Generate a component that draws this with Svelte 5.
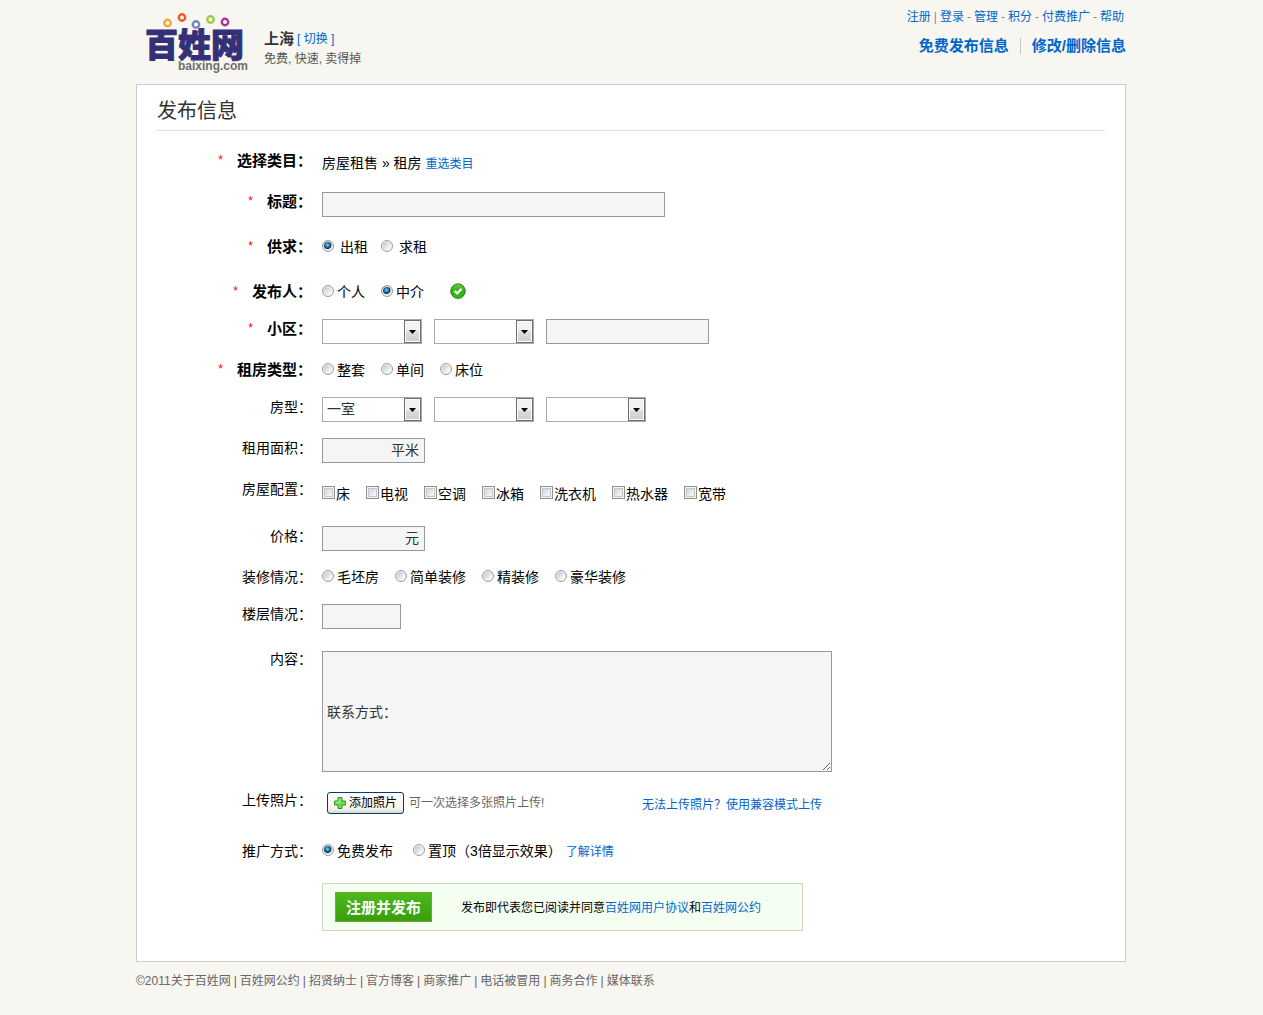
<script>
  const accountLinks = ['登录', '管理', '积分', '付费推广', '帮助'];
  const facilities = ['床', '电视', '空调', '冰箱', '洗衣机', '热水器', '宽带'];
  const decorations = ['毛坯房', '简单装修', '精装修', '豪华装修'];
  const rentTypes = ['整套', '单间', '床位'];
  const footerLinks = ['百姓网公约', '招贤纳士', '官方博客', '商家推广', '电话被冒用', '商务合作', '媒体联系'];
  const logoDots = [
    { x: 27.5, y: 12, color: '#f9a52b' },
    { x: 42, y: 6.5, color: '#f1592a' },
    { x: 56, y: 13.5, color: '#7385c5' },
    { x: 70.5, y: 8.5, color: '#9bcb4c' },
    { x: 85, y: 11, color: '#a8359a' },
  ];

  let supply = $state('出租');
  let publisher = $state('中介');
  let rentType = $state('');
  let decoration = $state('');
  let promotion = $state('free');
  let content = $state('\n\n\n联系方式：');
</script>

{#snippet dropdown(id, label, options)}
  <span class="dropdown">
    <select {id} aria-label={label}>
      {#each options as option}
        <option>{option}</option>
      {/each}
    </select>
    <span class="arrow" aria-hidden="true">
      <svg width="7" height="4" viewBox="0 0 7 4"><path d="M0 0h7L3.5 4z" fill="#000" /></svg>
    </span>
  </span>
{/snippet}

<div class="page">
  <header>
    <a class="logo" href="#home" aria-label="百姓网 baixing.com">
      <svg width="112" height="64" viewBox="0 0 112 64">
        <text class="logo-name" x="5" y="46">百姓网</text>
        <text class="logo-domain" x="38" y="59">baixing.com</text>
        {#each logoDots as dot}
          <circle cx={dot.x} cy={dot.y} r="3.2" fill="#fff" stroke={dot.color} stroke-width="2.4" />
        {/each}
      </svg>
    </a>
    <div class="city">
      <div class="city-name"><strong>上海</strong> <a href="#city">[ 切换 ]</a></div>
      <div class="slogan">免费, 快速, 卖得掉</div>
    </div>
    <div class="nav">
      <nav class="account">
        <a href="#register">注册</a><span>|</span>
        {#each accountLinks as link, i}
          {#if i > 0}<span>-</span>{/if}
          <a href="#account">{link}</a>
        {/each}
      </nav>
      <nav class="actions">
        <a href="#post">免费发布信息</a>
        <a href="#edit">修改/删除信息</a>
      </nav>
    </div>
  </header>

  <main>
    <h1>发布信息</h1>
    <form onsubmit={(e) => e.preventDefault()}>
      <div class="row">
        <span class="label required">选择类目：</span>
        <div class="field category">房屋租售 » 租房 <a href="#category">重选类目</a></div>
      </div>

      <div class="row roomy">
        <label class="label required" for="title">标题：</label>
        <div class="field"><input class="box title" id="title" type="text" /></div>
      </div>

      <div class="row roomy" role="radiogroup" aria-labelledby="supply-label">
        <span class="label required" id="supply-label">供求：</span>
        <div class="field choices spaced">
          {#each ['出租', '求租'] as item}
            <label><input type="radio" name="supply" value={item} bind:group={supply} />{item}</label>
          {/each}
        </div>
      </div>

      <div class="row compact" role="radiogroup" aria-labelledby="publisher-label">
        <span class="label required" id="publisher-label">发布人：</span>
        <div class="field choices">
          {#each ['个人', '中介'] as item}
            <label><input type="radio" name="publisher" value={item} bind:group={publisher} />{item}</label>
          {/each}
          <svg class="valid" width="18" height="18" viewBox="0 0 18 18" role="img" aria-label="正确">
            <defs>
              <linearGradient id="ok" x1="0" y1="0" x2="0" y2="1">
                <stop offset="0" stop-color="#6fc84d" />
                <stop offset="0.5" stop-color="#2fae12" />
                <stop offset="1" stop-color="#2bc40d" />
              </linearGradient>
            </defs>
            <circle cx="9" cy="9.6" r="7.6" fill="#b9b9b9" />
            <circle cx="9" cy="9" r="7.2" fill="url(#ok)" stroke="#2a8c1c" />
            <path d="M5.6 8.8l2.6 2.6 4.4-4.6" fill="none" stroke="#fff" stroke-width="2.4" />
          </svg>
        </div>
      </div>

      <div class="row">
        <label class="label required" for="district">小区：</label>
        <div class="field boxes">
          {@render dropdown('district', '区域', [''])}
          {@render dropdown('street', '地段', [''])}
          <input class="box estate" type="text" aria-label="小区名称" />
        </div>
      </div>

      <div class="row compact" role="radiogroup" aria-labelledby="type-label">
        <span class="label required" id="type-label">租房类型：</span>
        <div class="field choices">
          {#each rentTypes as item}
            <label><input type="radio" name="type" value={item} bind:group={rentType} />{item}</label>
          {/each}
        </div>
      </div>

      <div class="row">
        <label class="label" for="rooms">房型：</label>
        <div class="field boxes">
          {@render dropdown('rooms', '室', ['一室', '两室', '三室'])}
          {@render dropdown('halls', '厅', [''])}
          {@render dropdown('baths', '卫', [''])}
        </div>
      </div>

      <div class="row">
        <label class="label" for="area">租用面积：</label>
        <div class="field"><span class="box unit"><input id="area" type="text" />平米</span></div>
      </div>

      <div class="row facilities" role="group" aria-labelledby="facility-label">
        <span class="label" id="facility-label">房屋配置：</span>
        <div class="field choices">
          {#each facilities as item}
            <label><input type="checkbox" name="facility" value={item} />{item}</label>
          {/each}
        </div>
      </div>

      <div class="row">
        <label class="label" for="price">价格：</label>
        <div class="field"><span class="box unit"><input id="price" type="text" />元</span></div>
      </div>

      <div class="row compact" role="radiogroup" aria-labelledby="decoration-label">
        <span class="label" id="decoration-label">装修情况：</span>
        <div class="field choices">
          {#each decorations as item}
            <label><input type="radio" name="decoration" value={item} bind:group={decoration} />{item}</label>
          {/each}
        </div>
      </div>

      <div class="row roomy">
        <label class="label" for="floor">楼层情况：</label>
        <div class="field"><input class="box floor" id="floor" type="text" /></div>
      </div>

      <div class="row content">
        <label class="label" for="content">内容：</label>
        <div class="field"><textarea class="box" id="content" bind:value={content}></textarea></div>
      </div>

      <div class="row photos">
        <span class="label">上传照片：</span>
        <div class="field upload">
          <button class="add" type="button">
            <svg width="14" height="14" viewBox="0 0 14 14">
              <path d="M5 1.5h4V5h3.5v4H9v3.5H5V9H1.5V5H5z" fill="#6fdc52" stroke="#2c9a2a" stroke-linejoin="round" />
              <path d="M6.500 3v3.500H3" fill="none" stroke="#b5f09f" />
            </svg>
            添加照片
          </button>
          <span class="hint">可一次选择多张照片上传!</span>
          <a href="#compatible">无法上传照片？使用兼容模式上传</a>
        </div>
      </div>

      <div class="row promotion" role="radiogroup" aria-labelledby="promotion-label">
        <span class="label" id="promotion-label">推广方式：</span>
        <div class="field choices wide">
          <label><input type="radio" name="promotion" value="free" bind:group={promotion} />免费发布</label>
          <span class="top">
            <label><input type="radio" name="promotion" value="top" bind:group={promotion} />置顶（3倍显示效果）</label>
            <a href="#detail">了解详情</a>
          </span>
        </div>
      </div>

      <div class="submit">
        <button class="publish" type="submit">注册并发布</button>
        <p>发布即代表您已阅读并同意<a href="#agreement">百姓网用户协议</a>和<a href="#pledge">百姓网公约</a></p>
      </div>
    </form>
  </main>

  <footer>
    <span>©2011<a href="#about">关于百姓网</a></span>
    {#each footerLinks as link}
      <span>|</span>
      <a href="#footer">{link}</a>
    {/each}
  </footer>
</div>

<style>
  :global(body) {
    background: #f7f6f0;
    color: #000;
    font: 14px/20px 'Liberation Sans', 'Noto Sans CJK SC', sans-serif;
  }

  .page {
    max-width: 990px;
    margin: 0 auto;
    padding: 0 1px 24px 0;
  }

  a {
    color: #0066cc;
    font-size: 12px;
    text-decoration: none;
  }

  a:hover {
    text-decoration: underline;
  }

  header {
    display: flex;
    height: 84px;
  }

  .logo {
    padding: 11px 0 0 4px;
  }

  .logo svg {
    display: block;
  }

  .logo-name {
    fill: #343078;
    stroke: #343078;
    stroke-width: 1px;
    font: 900 33px 'Noto Sans CJK SC', sans-serif;
  }

  .logo-domain {
    fill: #6d6d6d;
    font: bold 12px 'Liberation Sans', sans-serif;
  }

  .city {
    padding: 29px 0 0 12px;
    color: #333;
  }

  .city strong {
    font-size: 15px;
  }

  .city-name {
    display: flex;
    gap: 3px;
  }

  .slogan {
    color: #555;
    font-size: 12px;
  }

  .nav {
    margin-left: auto;
    padding-top: 7px;
  }

  .account {
    display: flex;
    justify-content: flex-end;
    gap: 3px;
    padding-right: 2px;
    color: #888;
    font-size: 12px;
  }

  .actions {
    display: flex;
    align-items: center;
    justify-content: flex-end;
    padding-top: 11px;
  }

  .actions a {
    font-size: 15px;
    font-weight: bold;
    line-height: 16px;
  }

  .actions a + a {
    margin-left: 11px;
    padding-left: 11px;
    border-left: 1px solid #c8c8b8;
  }

  main {
    padding: 0 20px 30px;
    border: 1px solid #ccc;
    background: #fff;
  }

  h1 {
    margin: 0 0 20px;
    padding: 11px 0 4px;
    border-bottom: 1px solid #ddd;
    color: #333;
    font-size: 20px;
    font-weight: normal;
    line-height: 30px;
  }

  .row {
    display: grid;
    grid-template-columns: 155px 1fr;
    column-gap: 10px;
    align-items: start;
    min-height: 41px;
  }

  .compact {
    min-height: 37px;
  }

  .roomy {
    min-height: 45px;
  }

  .label {
    text-align: right;
  }

  .required {
    font-size: 15px;
    font-weight: bold;
  }

  .required::before {
    content: '*';
    margin-right: 14px;
    color: #f00;
    font-size: 12px;
    font-weight: normal;
    line-height: 12px;
    vertical-align: 2px;
  }

  .category {
    padding-top: 2px;
  }

  .box {
    box-sizing: border-box;
    display: block;
    height: 25px;
    padding: 1px 4px;
    border: 1px solid #999;
    border-radius: 0;
    background: #f5f5f5;
    color: #333;
    font: inherit;
  }

  .title {
    width: 343px;
  }

  .estate {
    width: 163px;
  }

  .floor {
    width: 79px;
  }

  textarea.box {
    width: 510px;
    height: 121px;
    line-height: 17px;
  }

  .unit {
    display: flex;
    align-items: center;
    width: 103px;
    padding: 0 5px 1px 4px;
  }

  .unit input {
    flex: 1;
    min-width: 0;
    padding: 0;
    border: 0;
    outline: 0;
    background: none;
    color: inherit;
    font: inherit;
  }

  .boxes {
    display: flex;
    gap: 12px;
  }

  .dropdown {
    position: relative;
    width: 100px;
    height: 25px;
  }

  select {
    appearance: none;
    box-sizing: border-box;
    width: 100%;
    height: 100%;
    padding: 0 20px 1px 4px;
    border: 1px solid #aaa;
    border-radius: 0;
    background: #fff;
    color: #333;
    font: inherit;
  }

  .arrow {
    position: absolute;
    top: 1px;
    right: 1px;
    bottom: 1px;
    box-sizing: border-box;
    display: flex;
    align-items: center;
    justify-content: center;
    width: 17px;
    border: 1px solid #707070;
    background: linear-gradient(#f2f2f2 50%, #ddd 50%, #cfcfcf);
    box-shadow: inset 0 0 0 1px #fafafa;
    pointer-events: none;
  }

  .choices {
    display: flex;
    flex-wrap: wrap;
    gap: 0 16px;
  }

  .choices label {
    display: flex;
    align-items: flex-start;
    gap: 2px;
  }

  .spaced {
    column-gap: 13px;
  }

  .spaced label {
    gap: 5px;
  }

  .choices input {
    appearance: none;
    box-sizing: border-box;
    width: 13px;
    height: 13px;
    margin: 2px 0 0;
    border: 1px solid #8e8f8f;
    background: linear-gradient(135deg, #c6cbd2, #f8f8f8 80%) padding-box;
    box-shadow: inset 0 0 0 1px #f4f4f4, inset 0 0 0 2px #c4c8cc;
  }

  .choices input[type='radio'] {
    width: 12px;
    height: 12px;
    margin: 3px 1px 0 0;
    border-color: #9a9b9b;
    border-radius: 50%;
    background: linear-gradient(135deg, #c2c6cc 15%, #fafafa 75%) padding-box;
    box-shadow: inset 0 0 0 1px #f2f2f2;
  }

  .choices input[type='radio']:checked {
    background: radial-gradient(circle at 45% 40%, #7fdcf8 0, #2a87b8 22%, #0d3250 44%, #e6e8ea 54%);
  }

  .valid {
    margin-left: 9px;
  }

  .facilities {
    min-height: 47px;
  }

  .facilities .field {
    padding-top: 5px;
  }

  .facilities label {
    gap: 1px;
  }

  .content {
    min-height: 141px;
  }

  .content .field {
    padding-top: 2px;
  }

  .photos {
    min-height: 51px;
  }

  .upload {
    display: flex;
    align-items: center;
    width: 500px;
  }

  .upload a {
    margin: 5px 0 0 auto;
  }

  .add {
    box-sizing: border-box;
    display: flex;
    align-items: center;
    gap: 2px;
    height: 22px;
    margin: 0 5px;
    padding: 0 6px 0 5px;
    border: 1px solid #003c74;
    border-radius: 3px;
    background: linear-gradient(#fff, #f2f1ec 80%, #dcd8cc);
    color: #000;
    font: 12px/20px 'Liberation Sans', 'Noto Sans CJK SC', sans-serif;
  }

  .hint {
    color: #666;
    font-size: 12px;
  }

  .promotion {
    min-height: 42px;
  }

  .wide {
    column-gap: 20px;
  }

  .top {
    display: flex;
    align-items: baseline;
    gap: 4px;
  }

  .submit {
    box-sizing: border-box;
    display: flex;
    align-items: center;
    width: 481px;
    height: 48px;
    margin-left: 165px;
    padding-left: 12px;
    border: 1px solid #ccd6c2;
    background: #f4fff2;
    font-size: 12px;
  }

  .submit p {
    margin: 0 0 0 29px;
    padding-top: 2px;
  }

  .publish {
    box-sizing: border-box;
    height: 30px;
    padding: 2px 10px 0;
    border: 1px solid #6fae22;
    background: linear-gradient(#4cba1b, #3a9c10);
    color: #fff;
    font: bold 15px/26px 'Liberation Sans', 'Noto Sans CJK SC', sans-serif;
  }

  footer {
    display: flex;
    flex-wrap: wrap;
    gap: 3px;
    padding-top: 9px;
    color: #666;
    font-size: 12px;
  }

  footer a {
    color: #666;
  }
</style>
